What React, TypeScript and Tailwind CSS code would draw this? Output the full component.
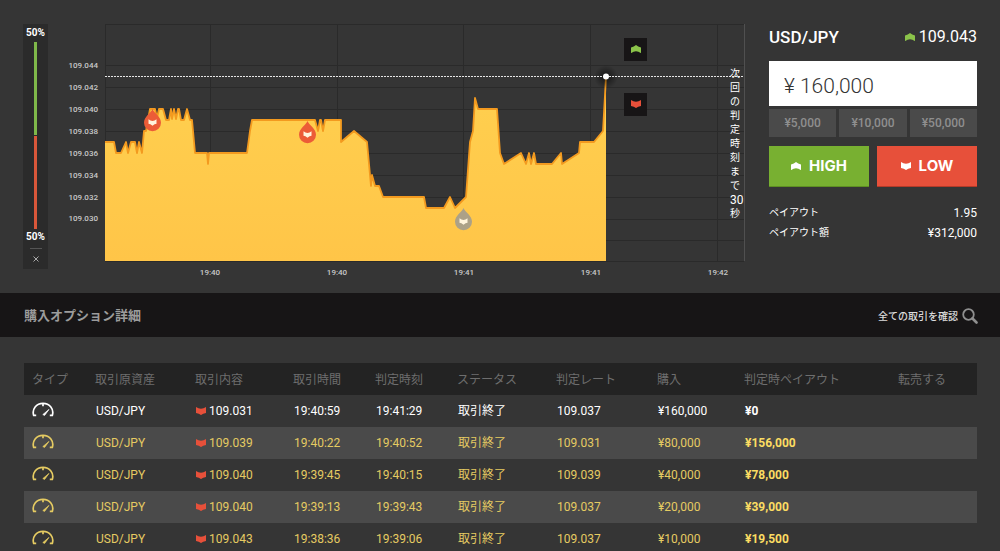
import { useState } from "react";
import { clsx } from "clsx";

type Point = [number, number];

const priceLabels = [
    { label: "109.044", y: 65 },
    { label: "109.042", y: 87 },
    { label: "109.040", y: 109 },
    { label: "109.038", y: 131 },
    { label: "109.036", y: 153 },
    { label: "109.034", y: 175 },
    { label: "109.032", y: 197 },
    { label: "109.030", y: 218 },
];

const timeLabels = [
    { label: "19:40", x: 210 },
    { label: "19:40", x: 337 },
    { label: "19:41", x: 464 },
    { label: "19:41", x: 591 },
    { label: "19:42", x: 718 },
];

const points: Point[] = [
    [105, 142], [114, 142], [116, 153], [121, 153], [126, 142], [128, 153], [131, 142], [135, 142],
    [137, 153], [139, 142], [142, 153], [144, 131], [146, 131], [150, 109], [155, 109], [157, 118],
    [159, 109], [163, 109], [166, 120], [169, 120], [171, 109], [172, 119], [174, 109], [176, 119],
    [178, 109], [179, 109], [181, 120], [184, 120], [187, 109], [190, 120], [192, 120], [195, 153],
    [207, 153], [208, 164], [209, 153], [247, 153], [250, 131], [252, 120], [315, 120], [318, 131],
    [320, 120], [321, 120], [323, 131], [325, 120], [341, 120], [341, 142], [354, 131], [367, 142],
    [370, 175], [371, 186], [372, 175], [375, 186], [379, 186], [383, 197], [424, 197], [426, 208],
    [444, 208], [450, 197], [455, 208], [466, 197], [470, 142], [473, 131], [475, 98], [478, 109],
    [497, 109], [500, 153], [504, 164], [521, 153], [526, 164], [529, 153], [531, 164], [534, 153],
    [536, 164], [552, 164], [561, 153], [562, 164], [579, 153], [580, 142], [594, 142], [603, 131],
    [606, 77],
];

const pins = [
    { x: 152, y: 122, color: "#ec5c37" },
    { x: 307, y: 134, color: "#ec5c37" },
    { x: 463, y: 221, color: "#aca187" },
];

const trades = [
    { entry: "109.031", start: "19:40:59", end: "19:41:29", rate: "109.037", amount: "¥160,000", payout: "¥0" },
    { entry: "109.039", start: "19:40:22", end: "19:40:52", rate: "109.031", amount: "¥80,000", payout: "¥156,000" },
    { entry: "109.040", start: "19:39:45", end: "19:40:15", rate: "109.039", amount: "¥40,000", payout: "¥78,000" },
    { entry: "109.040", start: "19:39:13", end: "19:39:43", rate: "109.037", amount: "¥20,000", payout: "¥39,000" },
    { entry: "109.043", start: "19:38:36", end: "19:39:06", rate: "109.037", amount: "¥10,000", payout: "¥19,500" },
];

const columns = [
    { title: "タイプ", width: "w-[63px]" },
    { title: "取引原資産", width: "w-[100px]" },
    { title: "取引内容", width: "w-[98px]" },
    { title: "取引時間", width: "w-[82px]" },
    { title: "判定時刻", width: "w-[82px]" },
    { title: "ステータス", width: "w-[99px]" },
    { title: "判定レート", width: "w-[101px]" },
    { title: "購入", width: "w-[87px]" },
    { title: "判定時ペイアウト", width: "w-[154px]" },
    { title: "転売する", width: "w-[87px]" },
];

const countdown = ["次", "回", "の", "判", "定", "時", "刻", "ま", "で", "30", "秒"];

function UpIcon({ className }: { className?: string }) {
    return (
        <svg viewBox="0 0 10 8" className={clsx("h-2 w-[10px] shrink-0", className)} fill="currentColor" aria-hidden="true">
            <path d="M0 2.4Q3 2 5 0Q7 2 10 2.4V8.200Q7.6 6.300 5 6.300Q2.4 6.300 0 8.200Z" />
        </svg>
    );
}

function DownIcon({ className }: { className?: string }) {
    return (
        <svg viewBox="0 0 10 8" className={clsx("h-2 w-[10px] shrink-0", className)} fill="currentColor" aria-hidden="true">
            <path d="M0 0Q2.4 1.700 5 1.700Q7.6 1.700 10 0V5.900Q7 6.300 5 8Q3 6.300 0 5.900Z" />
        </svg>
    );
}

function MeterIcon() {
    return (
        <svg viewBox="0 0 22 15" className="h-[15px] w-[22px]" fill="none" stroke="currentColor" strokeWidth="1.7" aria-hidden="true">
            <path d="M4.200 13.400H1.700C-.3 6.900 4.400 1.300 11 1.300S22.300 6.900 20.300 13.400H17.800" />
            <path d="M11 1.300V4.200" />
            <path d="M10.800 12.600L17 7.400L12.600 13.400Z" fill="currentColor" strokeWidth=".7" />
        </svg>
    );
}

function Sentiment() {
    return (
        <aside className="flex h-[245px] w-[25px] shrink-0 flex-col items-center bg-[#2b2b2b] text-[10px] font-bold leading-[18px] text-white">
            <span>50%</span>
            <div className="w-[3px] flex-1 bg-[#7fb84a]" />
            <div className="mt-px w-[3px] flex-1 bg-[#d9573a]" />
            <span className="leading-4">50%</span>
            <div className="mt-[3px] w-3 border-t border-[#555]" />
            <button type="button" aria-label="閉じる" className="flex h-5 w-full items-center justify-center text-[#aaa]">
                <svg viewBox="0 0 6 6" className="size-[6px]" stroke="currentColor" aria-hidden="true">
                    <path d="M.5.5L5.5 5.5M5.5.5L.5 5.5" />
                </svg>
            </button>
        </aside>
    );
}

function Chart() {
    const line = points.map(([x, y]) => `${x},${y}`).join(" ");

    return (
        <div className="relative min-w-0 flex-1">
            <svg viewBox="60 24 685 254" className="block h-auto w-full font-['Roboto',sans-serif]">
                <defs>
                    <linearGradient id="area" x1="0" x2="0" y1="0" y2="1">
                        <stop offset="0" stopColor="#ffd04f" />
                        <stop offset="1" stopColor="#ffc548" />
                    </linearGradient>
                    <radialGradient id="shade">
                        <stop offset="0" stopColor="#000" stopOpacity=".6" />
                        <stop offset="1" stopColor="#000" stopOpacity="0" />
                    </radialGradient>
                </defs>

                {/* grid */}
                <g stroke="#2a2a2a" strokeWidth="1">
                    {[24, 65, 87, 109, 131, 153, 175, 197, 219, 240, 261].map((y) => (
                        <path key={y} d={`M105 ${y + 0.5}H744`} />
                    ))}
                    {[105, 210, 337, 463, 590, 717].map((x) => (
                        <path key={x} d={`M${x + 0.5} 24V261`} />
                    ))}
                </g>
                <path d="M744.5 24V261" stroke="#505050" />

                {/* rate history */}
                <polygon points={`105,261 ${line} 606,261`} fill="url(#area)" />
                <polyline points={line} fill="none" stroke="#f39a1f" strokeWidth="1.8" strokeLinejoin="round" />

                <circle cx="606" cy="77" r="12" fill="url(#shade)" />
                <path d="M105 76.5H744" stroke="#e6e6e6" strokeDasharray="2 1" />
                <circle cx="606" cy="76.5" r="3" fill="#fff" />

                {pins.map((pin) => (
                    <g key={pin.x} transform={`translate(${pin.x} ${pin.y})`}>
                        <path d="M.5-13C2-9 9-5.500 9 .8A8.500 8.500 0 0 1-8 .8C-8-5.500-1-9 .5-13Z" fill={pin.color} />
                        <path d="M-3.500-2.700Q-1.600-.9 .5-.9Q2.600-.9 4.500-2.700V1.800Q2.600 2 .5 3.800Q-1.600 2-3.500 1.800Z" fill="#fff4dc" />
                    </g>
                ))}

                {/* axes */}
                <g fill="#c8c8c8" fontSize="8" fontWeight="500">
                    {priceLabels.map(({ label, y }) => (
                        <text key={label} x="98" y={y + 3} textAnchor="end">
                            {label}
                        </text>
                    ))}
                    {timeLabels.map(({ label, x }) => (
                        <text key={x} x={x} y="275" textAnchor="middle">
                            {label}
                        </text>
                    ))}
                </g>
            </svg>

            <button type="button" aria-label="HIGH" className="absolute left-[82.4%] top-[5.5%] flex size-[23px] items-center justify-center bg-[#171516] text-[#8bc34a]">
                <UpIcon />
            </button>
            <button type="button" aria-label="LOW" className="absolute left-[82.4%] top-[27%] flex size-[23px] items-center justify-center bg-[#171516] text-[#e8503a]">
                <DownIcon />
            </button>

            <div className="absolute right-0 top-[17%] flex w-[15px] flex-col text-[10px] leading-[14px] text-white">
                {countdown.map((char, i) => (
                    <span key={i} className={char === "30" ? "text-[12px]" : undefined}>
                        {char}
                    </span>
                ))}
            </div>
        </div>
    );
}

function TradePanel() {
    const [amount, setAmount] = useState("¥ 160,000");

    return (
        <section className="w-[208px] shrink-0 text-white">
            <div className="flex h-[37px] items-start justify-between leading-[26px]">
                <h1 className="text-[17px] font-medium">USD/JPY</h1>
                <div className="flex items-center gap-1 text-[16px]">
                    <UpIcon className="text-[#8bc34a]" />
                    109.043
                </div>
            </div>

            <input
                type="text"
                aria-label="購入金額"
                value={amount}
                onChange={(e) => setAmount(e.target.value)}
                className="block h-[45px] w-full bg-white px-[15px] pt-1 text-[21px] font-light text-[#333] outline-none"
            />

            <div className="mt-[3px] grid grid-cols-3 gap-[3px]">
                {["5,000", "10,000", "50,000"].map((preset) => (
                    <button
                        key={preset}
                        type="button"
                        onClick={() => setAmount(`¥ ${preset}`)}
                        className="h-7 bg-[#4a4a4a] text-[12px] font-medium text-[#8f8f8f]"
                    >
                        ¥{preset}
                    </button>
                ))}
            </div>

            <div className="mt-[9px] grid grid-cols-2 gap-2 font-['Inter',sans-serif] text-[15px] font-bold">
                <button type="button" className="flex h-[41px] items-center justify-center gap-2 border-b border-[#5e8f22] bg-[#78b031]">
                    <UpIcon />
                    HIGH
                </button>
                <button type="button" className="flex h-[41px] items-center justify-center gap-2 border-b border-[#b53a28] bg-[#e7503a]">
                    <DownIcon />
                    LOW
                </button>
            </div>

            <dl className="mt-4 text-[12px] leading-5">
                <div className="flex justify-between">
                    <dt className="text-[10px]">ペイアウト</dt>
                    <dd>1.95</dd>
                </div>
                <div className="flex justify-between">
                    <dt className="text-[10px]">ペイアウト額</dt>
                    <dd>¥312,000</dd>
                </div>
            </dl>
        </section>
    );
}

export default function App() {
    return (
        <main className="min-h-screen w-full overflow-hidden bg-[#353535] font-['Roboto','Noto_Sans_CJK_JP',sans-serif]">
            {/* ================= CHART + ORDER ================= */}
            <div className="flex min-h-[293px] items-start px-[23px] pt-6">
                <Sentiment />
                <div className="ml-3 mr-6 flex min-w-0 flex-1">
                    <Chart />
                </div>
                <TradePanel />
            </div>

            {/* ================= TITLE BAR ================= */}
            <header className="flex h-11 items-center justify-between bg-[#171516] pl-6 pr-[22px] pt-[2px]">
                <h2 className="text-[13px] font-bold text-[#9c9c9c]">購入オプション詳細</h2>
                <a href="#trades" className="flex items-center gap-1 text-[10px] font-medium text-[#dcdcdc]">
                    全ての取引を確認
                    <svg viewBox="0 0 16 16" className="size-4" fill="none" stroke="#8f8f8f" aria-hidden="true">
                        <circle cx="6.500" cy="6.500" r="5.300" strokeWidth="1.800" />
                        <path d="M10.500 10.500L14.500 14.500" strokeWidth="2.600" strokeLinecap="round" />
                    </svg>
                </a>
            </header>

            {/* ================= TRADES ================= */}
            <section id="trades" className="pl-6 pr-[23px] pt-[26px]">
                <table className="w-full table-fixed text-left text-[12px]">
                    <thead>
                        <tr className="h-8 bg-[#232323] text-[#6e6e6e]">
                            {columns.map((column) => (
                                <th key={column.title} scope="col" className={clsx("whitespace-nowrap p-0 pl-2 pt-[2px] font-normal", column.width)}>
                                    {column.title}
                                </th>
                            ))}
                        </tr>
                    </thead>
                    <tbody>
                        {trades.map((trade, i) => (
                            <tr
                                key={trade.start}
                                className={clsx("h-8", i % 2 === 1 && "bg-[#4a4a4a]", i === 0 ? "text-white" : "text-[#e5cb62]")}
                            >
                                <td className="p-0 pb-1 pl-2">
                                    <MeterIcon />
                                </td>
                                <td className="p-0 pl-[9px]">USD/JPY</td>
                                <td className="p-0 pl-[9px]">
                                    <span className="flex items-center gap-[3px]">
                                        <DownIcon className="text-[#e7503a]" />
                                        {trade.entry}
                                    </span>
                                </td>
                                <td className="p-0 pl-[9px]">{trade.start}</td>
                                <td className="p-0 pl-[9px]">{trade.end}</td>
                                <td className="p-0 pl-[9px]">取引終了</td>
                                <td className="p-0 pl-[9px]">{trade.rate}</td>
                                <td className="p-0 pl-[9px]">{trade.amount}</td>
                                <td className={clsx("p-0 pl-[9px] font-bold", i > 0 && "text-[#fbdc62]")}>{trade.payout}</td>
                                <td />
                            </tr>
                        ))}
                    </tbody>
                </table>
            </section>
        </main>
    );
}
